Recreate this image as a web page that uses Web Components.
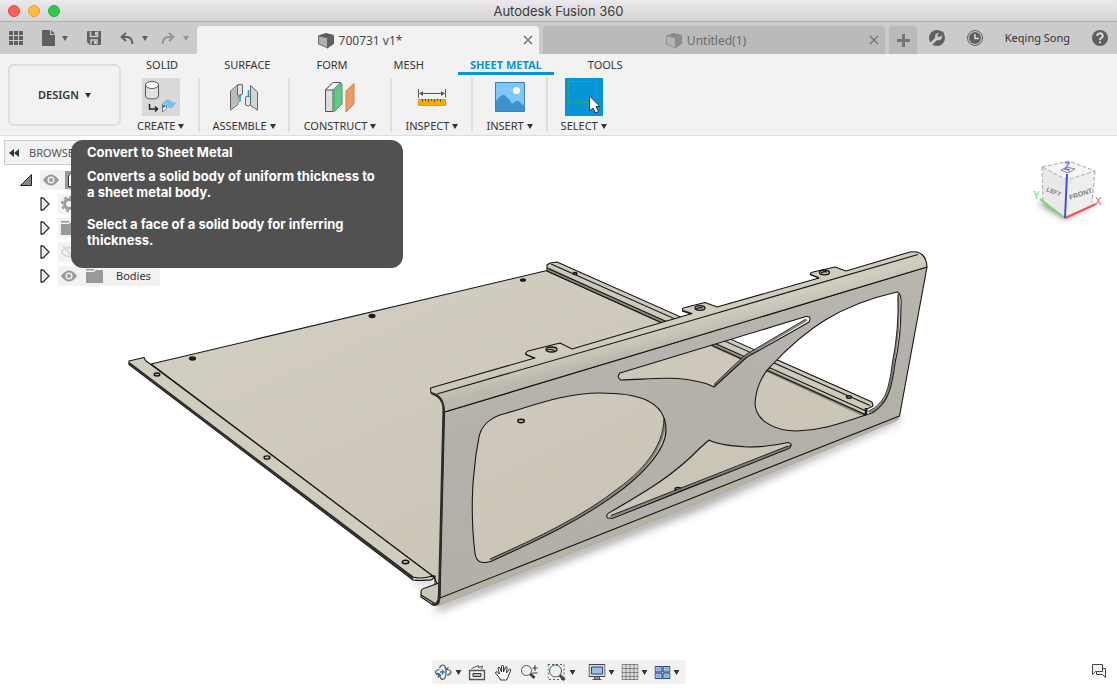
<!DOCTYPE html>
<html lang="en">
<head>
<meta charset="utf-8">
<title>Autodesk Fusion 360</title>
<style>
html,body{margin:0;height:100%}
body{font-family:"Noto Sans","Open Sans",sans-serif;font-size:11px;line-height:16px;color:#333;background:#fff;overflow:hidden}
</style>
</head>
<body>
<fusion-app></fusion-app>
<script>
const base = `*{box-sizing:border-box}button{font:inherit;color:inherit;background:none;border:0;padding:0;margin:0;display:flex;align-items:center;justify-content:center}svg{display:block;flex:none}`;
function define(name, css, html) {
  customElements.define(name, class extends HTMLElement {
    constructor() {
      super();
      this.attachShadow({mode: 'open'}).innerHTML = `<style>${base}${css}</style>${html}`;
    }
  });
}

define('drop-caret', `:host{display:block;flex:none;color:inherit}`,
  `<svg width="6" height="5" aria-hidden="true"><path d="M0 0h6L3 5z" fill="currentColor"/></svg>`);

/* Title bar */
define('title-bar', `
:host{display:flex;align-items:center;height:22px;flex:none;background:linear-gradient(#ebe9eb,#d4d2d5);border-bottom:1px solid #b1afb2;font-family:Inter,sans-serif;font-size:13px;color:#3a3a3a;padding:0 8px}
.lights,.end{display:flex;gap:8px;width:52px}
button{width:12px;height:12px;border-radius:50%;border:1px solid #e2463f;background:#fc605b}
button:nth-child(2){background:#fdbc40;border-color:#e0a033}
button:nth-child(3){background:#34c84a;border-color:#27aa35}
.t{flex:1;text-align:center}`,
`<div class="lights"><button aria-label="Close window"></button><button aria-label="Minimise"></button><button aria-label="Zoom window"></button></div>
<div class="t"><slot></slot></div><div class="end"></div>`);

/* Document tabs and quick access */
define('doc-tab', `
:host{display:flex;align-items:center;flex:1;min-width:0;height:28px;background:#bababa;color:#6a6a6a;border-radius:4px 4px 0 0;font-size:12px;padding-right:6px}
:host([active]){background:#f2f2f2;color:#484848}
.name{flex:1;gap:4px;height:28px;padding-top:2px}
.x{width:10px;height:28px}
svg.c{opacity:.5}:host([active]) svg.c{opacity:1}`,
`<button class="name"><svg class="c" width="17" height="16"><path d="M0 2.500L8 0l8 2-6 3z" fill="#5a5a5a"/><path d="M.5 3L10 5v10L.5 11z" fill="#b0b0b0" stroke="#666"/><path d="M9 5l7-3v9l-7 4.500z" fill="#606060"/></svg><slot></slot></button>
<button class="x" aria-label="Close tab"><svg width="10" height="10"><path d="M1 1l8 8M9 1L1 9" stroke="#757575" stroke-width="1.5"/></svg></button>`);

define('document-bar', `
:host{display:flex;height:32px;flex:none;background:#cbcbcb;align-items:flex-end;gap:4px}
.quick{display:flex;align-items:center;width:193px;height:32px;color:#606060;padding-left:9px;flex:none}
.quick button{height:32px}
.dim{opacity:.5}
.add{width:28px;height:28px;background:#bababa;border-radius:4px 4px 0 0;flex:none}
.side{display:flex;align-items:center;width:196px;height:32px;flex:none;padding:0 9px 0 8px;justify-content:space-between;color:#333}`,
`<div class="quick">
<button aria-label="Data panel"><svg width="14" height="14" fill="#606060"><path d="M0 0h4v4H0zM5 0h4v4H5zM10 0h4v4h-4zM0 5h4v4H0zM5 5h4v4H5zM10 5h4v4h-4zM0 10h4v4H0zM5 10h4v4H5zM10 10h4v4h-4z"/></svg></button>
<button aria-label="File" style="gap:6px;margin-left:19px"><svg width="14" height="16" fill="#606060"><path d="M0 0h8v5h5v11H0z"/><path d="M9 0l4 4H9z"/></svg><drop-caret></drop-caret></button>
<button aria-label="Save" style="margin-left:19px"><svg width="14" height="14"><path d="M0 1q0-1 1-1h12q1 0 1 1v12q0 1-1 1H3l-3-3z" fill="#606060"/><path d="M3.500 .5v5h7v-5M4 13.500V9h6v4.500" fill="none" stroke="#cbcbcb" stroke-width="1.500"/><path d="M8 1h2v3H8zM7 10h2v3H7z" fill="#cbcbcb"/></svg></button>
<button aria-label="Undo" style="gap:8px;margin-left:19px"><svg width="14" height="13"><path d="M6 1L1.500 5 6 9M2 5h5q5 0 5.500 7" fill="none" stroke="#606060" stroke-width="2"/></svg><drop-caret></drop-caret></button>
<button class="dim" aria-label="Redo" style="gap:8px;margin-left:13px"><svg width="14" height="13"><path d="M8 1l4.500 4L8 9M12 5H7Q2 5 1.500 12" fill="none" stroke="#606060" stroke-width="2"/></svg><drop-caret></drop-caret></button>
</div>
<doc-tab active>700731 v1*</doc-tab><doc-tab>Untitled(1)</doc-tab>
<button class="add" aria-label="New tab"><svg width="13" height="13"><path d="M6.500 0v13M0 6.500h13" stroke="#757575" stroke-width="3"/></svg></button>
<div class="side">
<button aria-label="Extensions"><svg width="16" height="16"><circle cx="8" cy="8" r="8" fill="#606060"/><path d="M2 14l6-6" stroke="#cbcbcb" stroke-width="3"/><path d="M12.500 4.500L10 7 8 5.500l2-2.500a3.600 3.600 0 1 0 2.500 1.500" fill="#cbcbcb"/><path d="M10 6l4-4" stroke="#606060" stroke-width="2.500"/></svg></button>
<button aria-label="Job status"><svg width="16" height="16"><circle cx="8" cy="8" r="7.500" fill="none" stroke="#606060"/><circle cx="8" cy="8" r="6" fill="#606060"/><path d="M8 4v4.500h4" fill="none" stroke="#ddd" stroke-width="1.500"/></svg></button>
<button>Keqing Song</button>
<button aria-label="Help"><svg width="16" height="16"><circle cx="8" cy="8" r="8" fill="#606060"/><path d="M5.300 6a2.700 2.500 0 1 1 4 2Q8 8.700 8 10M8 11.300v2" fill="none" stroke="#ddd" stroke-width="1.900"/></svg></button>
</div>`);

/* Ribbon */
define('ribbon-tab', `
:host{display:block}
button{height:21px;padding:4px 12px 0;border-bottom:3px solid transparent;white-space:nowrap}
:host([active]) button{color:#0696d7;font-weight:700;border-color:#0696d7}`, `<button><slot></slot></button>`);

define('tool-group', `
:host{display:block;border-left:2px solid #dedede;height:54px}
:host([first]){border-color:transparent}
button{flex-direction:column;padding:0 var(--pad,12px);justify-content:flex-start}
.i{display:flex;align-items:center;justify-content:center;width:38px;height:38px}
:host([hot]) .i{background:#d9d9d9}:host([picked]) .i{background:#0696d7}
.l{display:flex;align-items:center;gap:3px;height:20px;white-space:nowrap}`,
`<button><span class="i"><slot name="icon"></slot></span><span class="l"><slot></slot><drop-caret></drop-caret></span></button>`);

define('ribbon-bar', `
:host{display:flex;height:82px;flex:none;background:#f2f2f2;border-bottom:1px solid #dcdcdc;padding-left:8px}
.ws{width:113px;height:62px;margin-top:10px;border:2px solid #dedede;border-radius:6px;font-weight:600;gap:6px;flex:none}
.tabs{display:flex;gap:22px;padding-left:13px;height:24px}
.groups{display:flex;align-items:flex-start}
.wide{--pad:14px}.mid{--pad:13px}`,
`<button class="ws">DESIGN <drop-caret></drop-caret></button>
<div><nav class="tabs"><ribbon-tab>SOLID</ribbon-tab><ribbon-tab>SURFACE</ribbon-tab><ribbon-tab>FORM</ribbon-tab><ribbon-tab>MESH</ribbon-tab><ribbon-tab active>SHEET METAL</ribbon-tab><ribbon-tab>TOOLS</ribbon-tab></nav>
<div class="groups">
<tool-group first hot class="wide"><svg slot="icon" width="38" height="38"><path d="M3.500 7v11c0 4 13 4 13 0V7" fill="#e2e2e2" stroke="#555"/><ellipse cx="10" cy="7" rx="6.500" ry="3.500" fill="#fff" stroke="#555"/><path d="M7.500 26v5h8M13 28.500l2.500 2.500-2.500 2.500" fill="none" stroke="#222" stroke-width="1.500"/><path d="M20 26l4 2v3l-4 3z" fill="#2b7fb9"/><path d="M20.500 34v-4l4-2.500v3z" fill="#fff" stroke="#666" stroke-width=".8"/><path d="M20 26q5-6.500 8-3.500 3 3 7 1.500l-5 6q-3 1-5-1.500-1-2-5-2.500z" fill="#76c0f2"/></svg>CREATE</tool-group>
<tool-group><svg slot="icon" width="30" height="30"><path d="M1.500 9L9 2.500l4 0v10l-4 2v8L1.500 28z" fill="#ccc" stroke="#666"/><path d="M9 4.500V20l-7 6V10z" fill="#bbb"/><path d="M8.500 3.500q3-2 5-.5v9q-3 2-5 1z" fill="#e2e2e2" stroke="#666"/><path d="M21.500 3.500l7 6.500v18l-7-4.500z" fill="#d4d4d4" stroke="#666"/><path d="M16.500 15v8q3 2 5 0V15q-2-2-5 0z" fill="#e5e5e5" stroke="#666"/><path d="M11 14v6M19.500 8v7" stroke="#1696e0" stroke-width="1.500"/></svg>ASSEMBLE</tool-group>
<tool-group class="wide"><svg slot="icon" width="34" height="32"><path d="M2.500 30.500V9L10 1.500h8L10 9v21.500z" fill="#ddd" stroke="#555"/><path d="M2.500 9H10l8-7.500h-8z" fill="#fafafa" stroke="#555"/><path d="M11 10l8-7.500V23l-8 8z" fill="#5fcb86" stroke="#38a862"/><path d="M23 10l8-7.500V23l-8 8z" fill="#e99b6a" stroke="#d9803f"/></svg>CONSTRUCT</tool-group>
<tool-group class="mid"><svg slot="icon" width="30" height="18"><path d="M1.500 1v8.500M28.500 1v8.500M3 5.500h24" stroke="#555" fill="none"/><path d="M2 5.500L6 3v5zM28 5.500L24 3v5z" fill="#555"/><path d="M1.500 11.500h27v6h-27z" fill="#fa0" stroke="#e29a19"/><path d="M5.500 11v3M8.500 11v2M11.500 11v3M14.500 11v2M17.500 11v3M20.500 11v2M23.500 11v3" stroke="#555"/></svg>INSPECT</tool-group>
<tool-group class="mid"><svg slot="icon" width="30" height="30"><path d="M.5.5h29v29H.5z" fill="#7cc8fb" stroke="#3883ba"/><path d="M1 19q5-7 8-6t8 9l5 1V29H1z" fill="#3d92cc"/><path d="M15 24q6-6 8-5t6 5v5H15z" fill="#3d92cc"/><circle cx="21.500" cy="8.500" r="3.500" fill="#fff9d0"/></svg>INSERT</tool-group>
<tool-group picked class="mid"><svg slot="icon" width="38" height="38"><path d="M3.500 3.500h27v21h-27z" fill="none" stroke="#25b84c" stroke-dasharray="6 3"/><path d="M24.500 18v15l3.500-3 2.500 5 3-1.500-2.500-5h4z" fill="#fff" stroke="#333"/></svg>SELECT</tool-group>
</div></div>`);

/* Browser tree */
define('tree-row', `
:host{display:flex;align-items:center;height:24px;padding-left:36px}
:host([root]){padding-left:16px}
.tw{width:18px;height:20px;justify-content:flex-start}
:host([root]) .tw{width:20px}
.r{display:flex;align-items:center;height:20px;background:#f2f2f2;padding:0 9px 0 3px;gap:9px;font-size:11px}
:host([root]) .r{gap:6px}
:host([root]) .closed,:host(:not([root])) .open{display:none}
::slotted(span){margin-left:4px}`,
`<button class="tw" aria-label="Toggle"><svg class="closed" width="10" height="14"><path d="M1 1h2l6 6-6 6H1z" fill="#eee" stroke="#333" stroke-width="1.300"/></svg><svg class="open" width="12" height="12"><path d="M11.500 .5v11H.5z" fill="#888" stroke="#222"/></svg></button><div class="r"><slot></slot></div>`);

const eye = `<svg width="16" height="12"><path d="M0 6q8-11 16 0-8 11-16 0z" fill="#999"/><circle cx="8" cy="6" r="3.500" fill="#eee"/><circle cx="8" cy="6" r="2" fill="#999"/></svg>`;
const folder = `<svg width="17" height="14" fill="#999"><path d="M0 0h8v1.500H0zM0 3h8l2-2h7v13H0z"/></svg>`;
define('browser-panel', `
:host{display:block;width:260px}
header{display:flex;align-items:center;height:25px;border:1px solid #ccc;background:#f2f2f2;padding-left:4px;gap:9px;margin-bottom:3px;color:#555}`,
`<header><button aria-label="Collapse"><svg width="11" height="8"><path d="M5 0v8L0 4zM10 0v8L5 4z" fill="#333"/></svg></button><span>BROWSER</span></header>
<tree-row root>${eye}<svg width="16" height="18"><path d="M0 0h16v18H0z" fill="#999"/><path d="M3.500 15.500V5l2-2.500h7v13z" fill="#fff" stroke="#333"/></svg></tree-row>
<tree-row><svg width="16" height="16"><circle cx="8" cy="8" r="4.500" fill="none" stroke="#999" stroke-width="3"/><circle cx="8" cy="8" r="7" fill="none" stroke="#999" stroke-width="2" stroke-dasharray="3 2.500"/></svg></tree-row>
<tree-row>${folder}</tree-row>
<tree-row><svg width="16" height="14"><path d="M0 7q8-9 16 0-8 9-16 0zM2 1l11 12" fill="none" stroke="#d9d9d9" stroke-width="2"/></svg></tree-row>
<tree-row>${eye}${folder}<span>Bodies</span></tree-row>`);

define('tool-tip', `
:host{display:block;width:332px;height:128px;background:#515151;border-radius:12px;color:#fff;padding:4px 20px 4px 16px;font:700 13px/16px Inter,sans-serif}
h2,p{font:inherit;margin:0 0 8px}p+p{margin-top:16px}`, `<h2>Convert to Sheet Metal</h2><p>Converts a solid body of uniform thickness to a sheet metal body.</p><p>Select a face of a solid body for inferring thickness.</p>`);

/* Orientation cube */
define('view-cube', `:host{display:block;width:76px;height:76px}text{font-family:"Liberation Sans",sans-serif}`,
`<svg width="76" height="76" viewBox="0 0 76 76"><defs><filter id="s" x="-50%" y="-50%" width="200%" height="200%"><feGaussianBlur stdDeviation="3"/></filter></defs>
<path d="M6 47l27 16 28-14-26-8z" fill="#888" filter="url(#s)"/>
<path d="M10 11L37 5l26 10-28 9z" fill="#f5f5f5"/><path d="M10 11l25 13-2 38-22-17z" fill="#e9e9e9"/><path d="M35 24l28-9-3 34-27 13z" fill="#eee"/>
<path d="M10 11L37 5l26 10-28 9zM10 11l1 34M63 15l-3 32" fill="none" stroke="#aaa" stroke-dasharray="4 2"/>
<path d="M29 14l6-3 8 2-7 4zM33 12l5 4" fill="none" stroke="#888"/><path d="M29 21h11v7H29z" fill="#dde2ea" opacity=".6"/>
<path d="M8 43l25 19" stroke="#75d975" stroke-width="2"/><path d="M33 62l31-14" stroke="#eb5757" stroke-width="2"/><path d="M35 18l-2 44" stroke="#4b4be0" stroke-width="2"/>
<g fill="#7b7f86" font-weight="700"><text transform="translate(14 35) rotate(22)" font-size="6">LEFT</text><text transform="translate(38 44) rotate(-18)" font-size="7">FRONT</text></g>
<g font-size="10" font-weight="700"><text x="32" y="14" fill="#7272ee">Z</text><text x="1" y="43" fill="#8dea8d">Y</text><text x="63" y="49" fill="#f28080">X</text></g></svg>`);

/* Navigation tools */
define('nav-bar', `:host{display:flex;align-items:center;height:24px;width:253px;background:#f1f1f1;padding-left:2px;gap:7px;color:#333}button{gap:3px;height:24px}.m{margin-left:2px}.sp{margin-left:6px}`,
`<button aria-label="Orbit"><svg width="18" height="17" fill="none" stroke="#555" stroke-width="1.200"><path d="M5 4Q6 1 8.500 1q3 0 3 7t-3 7.500Q6 15.500 5 11"/><path d="M5 5.500Q1 6 1 8.500 2 11 6 11M11.500 5.500q5 0 5 3-1 2.500-4 2.500M3 9l3 2-3 2.500M10 3l2 2.500L14 3"/><path d="M8 5.500v5M5.500 8h5" stroke="#1684d8" stroke-width="1.500"/></svg><drop-caret></drop-caret></button>
<button aria-label="Look at"><svg width="17" height="17"><path d="M1 6.500h15v9H1z" fill="#f4f4f4" stroke="#555" stroke-width="1.500"/><path d="M4.500 9.500h8v3h-8z" fill="#bbb" stroke="#333"/><path d="M3 4.500l7-3v2l4-1.500-1 3" fill="none" stroke="#555"/></svg></button>
<button class="m" aria-label="Pan"><svg width="17" height="17"><path d="M5 14L1 9q0-2 2-1l2 2L3.500 4q1-2 2 0L7 8V2q1-2 2 0v6l2-5q2-1 1.500 1L12 9l3-4q2 0 1 2l-3 7-1 2H6z" fill="#fff" stroke="#333"/></svg></button>
<button class="m" aria-label="Zoom"><svg width="18" height="17"><path d="M9 9l5 5" stroke="#444" stroke-width="3"/><circle cx="6" cy="6.500" r="5" fill="#e8f4f6" stroke="#555"/><path d="M14.500 1v6M12 4h5M12 9h5" stroke="#333"/></svg></button>
<button class="m" aria-label="Zoom window"><svg width="19" height="17"><path d="M.5.500h16v15H.5z" fill="none" stroke="#555" stroke-dasharray="2 2"/><path d="M11 10l6 6" stroke="#444" stroke-width="3"/><circle cx="8" cy="7" r="6" fill="#e8f4f6" stroke="#555"/></svg><drop-caret></drop-caret></button>
<button class="sp" aria-label="Display settings"><svg width="17" height="17"><path d="M.5.500h16v12H.5z" fill="#ddd" stroke="#444"/><path d="M3 3h11v7H3z" fill="#9dbfe8" stroke="#26477d"/><path d="M6 13h5v2H6zM4 15.500h9" fill="#ccc" stroke="#555"/></svg><drop-caret></drop-caret></button>
<button aria-label="Grid"><svg width="17" height="17"><path d="M.5.500h16v15H.5zM4.500 0v16M8.500 0v16M12.500 0v16M0 4.500h17M0 8.500h17M0 12.500h17" fill="#eee" stroke="#777"/><path d="M2.500 0v16M6.500 0v16M10.500 0v16M14.500 0v16M0 2.500h17M0 6.500h17M0 10.500h17" stroke="#bbb" stroke-width=".5"/></svg><drop-caret></drop-caret></button>
<button aria-label="Viewports"><svg width="16" height="13"><path d="M.5.500h7v5.500h-7zM8.500.500h7v5.500h-7zM.5 7h7v5.500h-7zM8.500 7h7v5.500h-7z" fill="#9dbfe8" stroke="#26477d"/><path d="M3 2.500h2v1.500H3zM11 2.500h2v1.500h-2zM3 9h2v1.500H3zM11 9h2v1.500h-2z" fill="#cfe2f8" stroke="#5078b0" stroke-width=".5"/></svg><drop-caret></drop-caret></button>`);

/* Sheet metal chassis */
define('model-view', `:host{display:block;width:100%;height:100%}svg{width:100%;height:100%}`,
`<svg viewBox="0 136 1117 552" role="img" aria-label="Sheet metal chassis"><defs>
<linearGradient id="fl" x1="0" y1="0" x2="1" y2="1"><stop stop-color="#d3cfc2"/><stop offset=".5" stop-color="#cdc8bb"/><stop offset="1" stop-color="#c8c1b4"/></linearGradient>
<linearGradient id="pn" x1="0" y1="0" x2=".3" y2="1"><stop stop-color="#bebbb2"/><stop offset=".5" stop-color="#b4b1aa"/><stop offset="1" stop-color="#b2afa7"/></linearGradient>
<linearGradient id="bd" gradientUnits="userSpaceOnUse" x1="680" y1="322" x2="685" y2="342"><stop stop-color="#d0ccbe"/><stop offset=".5" stop-color="#c7c3b6"/><stop offset="1" stop-color="#bab7ad"/></linearGradient>
<filter id="bl" x="-10%" y="-10%" width="120%" height="120%"><feGaussianBlur stdDeviation="4"/></filter></defs>
<path d="M412 580h24v4h-20zM436 604L898 416l4 4L700 510 437 612z" fill="#777" opacity=".6" filter="url(#bl)"/>
<g stroke="#151515" stroke-width="1.100" stroke-linejoin="round">
<path d="M151 364L547 270.500 866 415 838 426 440 590l-6-13z" fill="url(#fl)"/>
<path d="M129 361l15-3.500 1.500 3L434 577q-2 4-6 3-8 1-15 0L129 364.500z" fill="#d0ccbe"/>
<path d="M129 362.500L413 577q8 2 15 0l6-1" fill="none"/>
<path d="M129 363.500L413 578.500" fill="none" stroke-width="2" stroke="#333"/>
<path d="M430 576h5v9" fill="none"/>
<path d="M547 271v-6l3-2 7-1L872 402l1 4-6 3-1 6z" fill="#cdc9bb"/>
<path d="M548 269L862 414" stroke-width="3.500" stroke="#8d8b82"/>
<path d="M547 271L866 415M547 268L866 411M551 264L870 405.500" fill="none"/>
<path d="M866 408v7" stroke-width="2.500"/>
<g fill="#222"><ellipse cx="192.500" cy="358.500" rx="3" ry="1.600"/><ellipse cx="372" cy="316" rx="3" ry="1.600"/><ellipse cx="523" cy="280" rx="2.500" ry="1.300"/></g>
<g fill="#b8b4a7" stroke-width="1.400"><ellipse cx="157" cy="374.500" rx="2.800" ry="1.500"/><ellipse cx="267" cy="457.500" rx="3" ry="1.600"/><ellipse cx="405.500" cy="562" rx="3.300" ry="1.800"/><ellipse cx="521" cy="421" rx="3.300" ry="1.700"/><ellipse cx="575" cy="273.500" rx="2" ry="1"/><ellipse cx="849" cy="397" rx="2.500" ry="1.300"/><ellipse cx="678" cy="489" rx="3" ry="1.500"/></g>
<path d="M439 583l-14 5q-4 1-4 4v5l12 8q4 1 5-2z" fill="#cbc7ba"/><path d="M421 595l13 8q3 1 4-3" fill="none"/>
<path d="M438 606L440 598 898 415.500h2l-1 3-4 3L700 502z" fill="#b6b3a4" stroke="#a8a598" stroke-width=".6"/>
<path fill="none" stroke="#85827a" stroke-width="2" d="M665 420C665 450 639 475 621 488 582 518 538 539 490 560M714 386Q735 366 746 356L807 320M898.500 294Q900 330 893.500 362 890 394 882.500 402 876 410 869 412.500M789 447L610 517"/>
<path fill-rule="evenodd" fill="url(#pn)" d="M444.500 412L927 267 899.500 416 440 598z
M500 415C535 405 565 393 600 393 632 393 666 398 666 430 666 450 643 473 624 488 584 519 538 540 492 561 480 565 476 561 475 553 471 522 472 490 474 473 475 460 477 447 479 437 482 423 492 418 500 415z
M620 373L806 316.500Q812 316 809 322C785 336 765 347 747 357L714 387Q706 383 700 382C670 375 645 380 621 380q-5-3-1-7z
M897 292Q902 294 901 306 901 338 895 363 891 395 883 403 879 409 872 413C846 421 826 430 797 431 774 431 755 420 755 403 756 387 763 374 770 367 806 328 840 305 897 292z
M709 440Q717 445 747 447 770 447 788 442.500q6 1 1 6L612 518.500q-8 0-4-5C645 492 673 476 700 448z"/>
<path fill="none" stroke-width=".9" d="M664 418C664 449 638 474 620 487 582 517 538 537.500 490 559M714 384.500Q735 364 746 354.500L806 319M898 295Q899 330 892.500 362 889 393 881.500 401 875 409 868 411.500M788 446L611 515.500"/>
<path d="M430.500 388L535 358l-8-3q-3-2 1-4l32-8 12 6L692 313.500l-9-3q-2-2 2-3l20-5 12 4.500 102-29-8-3q-2-2 2-3l22-5 11 4 64-19q16-2 17 15L444.500 412Q444 402 438 397l-7-4z" fill="url(#bd)"/>
<path d="M437 394L700 318 918 254.500M525 354l9 4M682 311l9 3M810 274l9 4" fill="none"/>
<path d="M431 393q13 3 12.500 18L439 600q0 6-7 4" fill="none" stroke-width="2.200" stroke="#2c2c2a"/>
<g fill="#b8b4a7" stroke-width="1.300"><ellipse cx="551.500" cy="349.500" rx="5.500" ry="2.500"/><ellipse cx="700" cy="308" rx="5" ry="2.300"/><ellipse cx="824.500" cy="272.500" rx="5" ry="2.300"/></g>
<path d="M547 350q4-2 8 1M696 309q4-2 7-1M821 273q4-2 6-1" fill="none"/>
</g></svg>`);

define('fusion-app', `
:host{display:flex;flex-direction:column;height:100vh;min-height:400px}
main{flex:1;position:relative;min-height:0;background:#fff}
browser-panel{position:absolute;left:4px;top:4px}
tool-tip{position:absolute;left:71px;top:4px;box-sizing:border-box}
view-cube{position:absolute;right:9px;top:20px}
nav-bar{position:absolute;left:50%;bottom:4px;transform:translateX(-50%)}
.chat{position:absolute;right:10px;bottom:10px}`,
`<title-bar>Autodesk Fusion 360</title-bar><document-bar></document-bar><ribbon-bar></ribbon-bar>
<main><model-view></model-view><browser-panel></browser-panel><tool-tip role="tooltip"></tool-tip><view-cube></view-cube><nav-bar></nav-bar>
<button class="chat" aria-label="Comments"><svg width="15" height="14"><path d="M4.500 4.500h9v9l-3-3h-6z" fill="#eee" stroke="#444"/><path d="M.5.500h10v7h-7l-3 3z" fill="#f3f3f3" stroke="#444"/></svg></button></main>`);
</script>
</body>
</html>
